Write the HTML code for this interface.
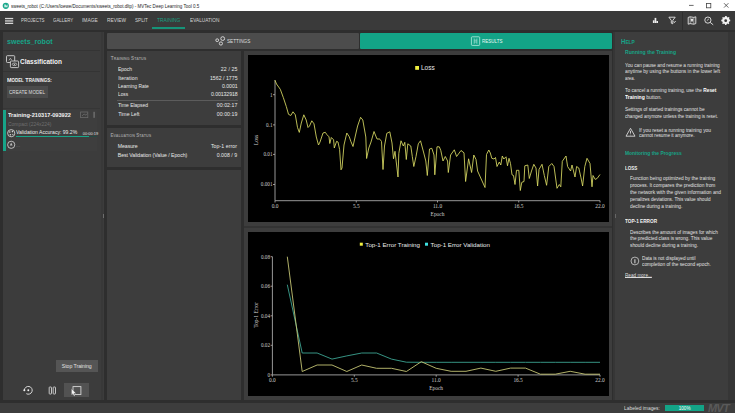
<!DOCTYPE html>
<html><head><meta charset="utf-8">
<style>
*{margin:0;padding:0;box-sizing:border-box}
html,body{width:735px;height:413px;overflow:hidden;background:#2e2e2e;font-family:"Liberation Sans",sans-serif;color:#e6e6e6}
.a{position:absolute}
.t{position:absolute;white-space:nowrap}
.t b{color:#fff}
</style></head><body>
<!-- title bar -->
<div class="a" style="left:0;top:0;width:735px;height:11.2px;background:#fff"></div>
<!-- toolbar -->
<div class="a" style="left:0;top:11.2px;width:735px;height:18.9px;background:#3a3a3a"></div>
<div class="a" style="left:152px;top:27.2px;width:33px;height:1.5px;background:#169479"></div>
<div class="a" style="left:682px;top:12px;width:1px;height:18.1px;background:#2e2e2e"></div>
<!-- left panel -->
<div class="a" style="left:2.7px;top:32.2px;width:101.5px;height:367.6px;background:#3c3c3c"></div>
<div class="a" style="left:101.2px;top:32.2px;width:2.2px;height:367.6px;background:#383838"></div>
<div class="a" style="left:3px;top:49.6px;width:97px;height:1px;background:#343434"></div>
<div class="a" style="left:3px;top:70.8px;width:97px;height:1px;background:#343434"></div>
<div class="a" style="left:7px;top:86.2px;width:41.2px;height:11.4px;background:#4b4b4b"></div>
<div class="a" style="left:3px;top:108.3px;width:97px;height:1px;background:#363636"></div>
<div class="a" style="left:6px;top:109.8px;width:91px;height:41.7px;background:#3e3e3e"></div>
<div class="a" style="left:2.7px;top:109.8px;width:3.4px;height:41.7px;background:#17a488"></div>
<div class="a" style="left:16px;top:135.8px;width:80.6px;height:1.3px;background:#244a43"></div>
<div class="a" style="left:16px;top:135.8px;width:72.6px;height:1.3px;background:#17a488"></div>
<div class="a" style="left:102.6px;top:214.4px;width:1.3px;height:3.9px;background:#6e6e6e"></div>
<!-- stop tooltip & button -->
<div class="a" style="left:56px;top:359.9px;width:41.9px;height:11.9px;background:#555"></div>
<div class="a" style="left:64.4px;top:383.3px;width:25px;height:13.8px;background:#525252"></div>
<!-- middle tabs -->
<div class="a" style="left:106.7px;top:32.9px;width:252.6px;height:16px;background:#4c4c4c;border-radius:1px"></div>
<div class="a" style="left:360px;top:32.9px;width:252.2px;height:16.1px;background:#13a487;border-radius:1px"></div>
<!-- status cards -->
<div class="a" style="left:106.7px;top:50.8px;width:134.6px;height:74.5px;background:#3d3d3d"></div>
<div class="a" style="left:116.5px;top:99.5px;width:121.5px;height:0.9px;background:#5c5c5c"></div>
<div class="a" style="left:106.7px;top:127.7px;width:134.6px;height:39.6px;background:#3d3d3d"></div>
<div class="a" style="left:106.7px;top:169.8px;width:134.6px;height:230px;background:#3d3d3d"></div>
<!-- charts frame -->
<div class="a" style="left:243.9px;top:50.8px;width:368.2px;height:349px;background:#3d3d3d"></div>
<div class="a" style="left:247.5px;top:55px;width:361.7px;height:166.6px;background:#000"></div>
<div class="a" style="left:244px;top:225.6px;width:368px;height:2.6px;background:#333"></div>
<div class="a" style="left:247.5px;top:232px;width:361.7px;height:164.2px;background:#000"></div>
<!-- help panel -->
<div class="a" style="left:612.7px;top:31.5px;width:122.3px;height:368.3px;background:#363636"></div>
<div class="a" style="left:615.3px;top:32.3px;width:112.8px;height:367.5px;background:#3d3d3d"></div>
<div class="a" style="left:615px;top:214px;width:1.1px;height:4px;background:#666"></div>
<!-- status bar -->
<div class="a" style="left:0;top:402.6px;width:735px;height:10.4px;background:#3d3d3d"></div>
<div class="a" style="left:665.3px;top:405.3px;width:38.7px;height:6.1px;background:#13a487"></div>

<svg class="a" style="left:0;top:0" width="735" height="413" viewBox="0 0 735 413">
<g stroke="#a8a8a8" stroke-width="0.9" fill="none">
<path d="M275 80V200.7H600"/>
<path d="M273 94.7H275"/>
<path d="M273 124.9H275"/>
<path d="M273 154.4H275"/>
<path d="M273 184.5H275"/>
<path d="M275 200.7V202.5"/>
<path d="M356.25 200.7V202.5"/>
<path d="M437.5 200.7V202.5"/>
<path d="M518.75 200.7V202.5"/>
<path d="M600 200.7V202.5"/>
<path d="M272.4 256.7V374.9H600"/>
<path d="M270.6 256.7H272.4"/>
<path d="M270.6 286.2H272.4"/>
<path d="M270.6 315.8H272.4"/>
<path d="M270.6 345.3H272.4"/>
<path d="M270.6 374.9H272.4"/>
<path d="M272.4 374.9V376.7"/>
<path d="M354.3 374.9V376.7"/>
<path d="M436.2 374.9V376.7"/>
<path d="M518.1 374.9V376.7"/>
<path d="M600 374.9V376.7"/>
</g>
<g font-family="Liberation Serif" fill="#d0d0d0" font-size="5.2" text-anchor="end">
<text x="272.5" y="96.5">1</text>
<text x="272.5" y="126.7">0.1</text>
<text x="272.5" y="156.20000000000002">0.01</text>
<text x="272.5" y="186.3">0.001</text>
<text x="270" y="258.5">0.08</text>
<text x="270" y="288.0">0.06</text>
<text x="270" y="317.6">0.04</text>
<text x="270" y="347.1">0.02</text>
<text x="270" y="376.7">0</text>
</g>
<g font-family="Liberation Serif" fill="#d0d0d0" font-size="5.4" text-anchor="middle">
<text x="275" y="207.8">0.0</text>
<text x="356.25" y="207.8">5.5</text>
<text x="437.5" y="207.8">11.0</text>
<text x="518.75" y="207.8">16.5</text>
<text x="600" y="207.8">22.0</text>
<text x="437.5" y="215.8">Epoch</text>
<text x="272.4" y="382">0.0</text>
<text x="354.3" y="382">5.5</text>
<text x="436.2" y="382">11.0</text>
<text x="518.1" y="382">16.5</text>
<text x="600" y="382">22.0</text>
<text x="436.2" y="390">Epoch</text>
<text transform="translate(258,140) rotate(-90)" x="0" y="0">Loss</text>
<text transform="translate(258,315) rotate(-90)" x="0" y="0">Top-1 Error</text>
</g>
<rect x="415.2" y="66" width="3.8" height="3.8" fill="#f0f040"/>
<text x="421" y="70.4" font-size="6.5" font-family="Liberation Sans" fill="#e8e8e8">Loss</text>
<rect x="359.8" y="242.7" width="3" height="3" fill="#f0f040"/>
<text x="365.3" y="246.6" font-size="6.2" font-family="Liberation Sans" fill="#e8e8e8">Top-1 Error Training</text>
<rect x="425" y="242.7" width="3" height="3" fill="#3ee0e0"/>
<text x="430.6" y="246.6" font-size="6.2" font-family="Liberation Sans" fill="#e8e8e8">Top-1 Error Validation</text>
<polyline points="275,80.3 276.5,84 280.3,89.3 283.3,97.5 286.3,106.5 288.5,114.3 290.8,115.5 293,111.8 295.3,114.8 297.5,127.5 299.3,132.4 301.3,123 303.8,114.8 306.2,120 308,127.5 309.5,126 311.8,120.8 314,123.8 316.3,137 318.5,145 320,142 323,133 325.3,132.3 326.8,134.5 329,136.8 329.8,143.5 331.3,137.5 333.6,139.8 334.3,148 336.6,141.3 338,142 339.6,149.5 341,169.8 342,168 344,145 346.8,133 349.3,136.8 350.8,141.3 353,146.5 355.3,136 357.6,126 360.6,117.3 362.8,120 365.8,137 366.6,158.5 368.8,148 371,142 374,131.5 377,139 379.4,139 380,139.3 381.5,141.5 383,169.5 384.5,146 386.8,133.3 389.8,131.8 392,143 393.5,158.8 395,151.3 398,177 398.8,153.5 401,140.8 403.3,146 404.8,142.3 406.3,159.5 407.8,143.8 410.8,146 412.3,156.5 413.8,166.5 416,156.5 418.3,143.8 420.5,140.8 423.5,152 425.8,161 427.3,175.5 429.5,149 431.8,148.3 434,155 434.8,174.8 437,146.8 439.3,146.8 440.8,150.5 443,161 445.3,156.5 447.6,161 448.3,172.5 450.6,155 454.3,149.8 456.6,156.5 461,150.5 464,152.8 465.6,181.5 468.6,158.8 471.6,172.5 473.8,155 476,159.5 477.6,171 485,187.5 486.5,154.5 488.8,150 490.3,153 491.8,158.3 494,159 495.5,157.5 497,166.5 499.3,162 500.8,165 502.3,156 503.8,159 506,156.8 507.5,165.8 509,158.3 510.5,163.5 512,174.8 513.5,175.5 515,184.5 516.5,170.3 518.8,170.3 520.3,190.5 521.8,182.3 524,181.5 524.8,165.8 527.8,165 529.3,178.5 531.5,171 533.8,164.3 536,168 537.6,186 539,169.5 542,164.3 544.3,175.5 546.6,185.3 548.8,166.5 551.8,163.5 554,166.5 557,188.3 559.3,184.5 560.8,186.8 562.3,161.3 566,156 567.6,166.5 570.6,171 572,165 575,177 576.6,166.5 578.8,168 581,177.8 582.6,186 584.8,166.5 587,158.3 590,163.5 592,186.8 593,175.5 595.2,179.4 597.2,178.4 600,174.5" fill="none" stroke="#dadc64" stroke-width="0.85" stroke-linejoin="round"/>
<polyline points="287.3,284.7 302.2,353 317.1,353 332.0,359.1 346.8,355.9 361.7,353 376.6,353 391.5,359.1 406.4,362.2 421.3,362.3 436.2,362.3 451.1,362.3 466.0,362.3 480.9,362.3 495.8,362.3 510.6,362.3 525.5,362.3 540.4,362.3 555.3,362.3 570.2,362.3 585.1,362.3 600.0,362.3" fill="none" stroke="#3ca492" stroke-width="0.9"/>
<polyline points="287.3,256.7 302.2,371.5 317.1,365 332.0,365 346.8,371.5 361.7,365 376.6,368.3 391.5,368.3 406.4,371.5 421.3,361.7 436.2,368.3 451.1,371.3 466.0,371.3 480.9,368.1 495.8,371.3 510.6,368.1 525.5,368.1 540.4,374.2 555.3,374.2 570.2,371.3 585.1,374.2 600.0,374.2" fill="none" stroke="#c4c474" stroke-width="0.9"/>
</svg>
<svg class="a" style="left:0;top:0" width="735" height="413" viewBox="0 0 735 413">
<!-- title logo -->
<circle cx="5.8" cy="5.8" r="3.1" fill="#1aa88c"/>
<path d="M4.3 4.4h1.3l0.9 1.4 0.9-1.4h0.2v2.8h-3.3z" fill="#e8f6f2" opacity="0.85"/>
<!-- window controls -->
<path d="M689 5.4H693.6" stroke="#444" stroke-width="0.8"/>
<rect x="706.4" y="3.4" width="4.4" height="4.4" fill="none" stroke="#444" stroke-width="0.8"/>
<path d="M724 3.2L728.4 7.6M728.4 3.2L724 7.6" stroke="#444" stroke-width="0.8"/>
<!-- hamburger -->
<g fill="#d8d8d8"><rect x="5" y="17.9" width="8.2" height="1.3"/><rect x="5" y="20.3" width="8.2" height="1.3"/><rect x="5" y="22.7" width="8.2" height="1.3"/></g>
<!-- toolbar right icons -->
<g fill="#eee">
<rect x="652.9" y="20.3" width="1.6" height="2.7"/><rect x="654.6" y="17.9" width="1.7" height="5.1"/><rect x="656.4" y="21" width="1.6" height="2"/>
</g>
<g fill="none" stroke="#e6e6e6" stroke-width="0.9">
<path d="M668.9 17.2H675.2L672.8 20.4V23.8L671.3 23.2V20.4Z"/>
<path d="M673.6 21.6L674.4 22.6L675.6 21"/>
<path d="M688.2 17.4V24.2L690.2 23.6L693.8 24.2L695.8 23.6V16.8L693.8 17.4L690.2 16.8Z"/><path d="M690.2 16.8V23.6M693.8 17.4V24.2" stroke-width="0.6"/>
<circle cx="707.9" cy="20.1" r="3.1"/>
<path d="M710.2 22.4L713.2 24.8"/>
<path d="M706.8 20.7L708.9 18.9" stroke-width="0.8"/>
</g>
<path d="M692 22.4L690.9 20.3A1.2 1.2 0 1 1 693.1 20.3Z" fill="#e6e6e6"/>
<!-- gear -->
<g transform="translate(725.7,20.7)">
<path fill="#f2f2f2" fill-rule="evenodd" d="M-0.8,-4.3L0.8,-4.3L1.1,-3.1L2.2,-2.6L3.2,-3.3L4.3,-2.2L3.6,-1.2L4.1,-0.1L5,0.2L5,1.8L3.8,2.1L3.3,3.2L4,4.2L2.9,5.3L1.9,4.6L0.8,5.1L0.5,6.3L-1,6.3L-1.3,5.1L-2.4,4.6L-3.4,5.3L-4.5,4.2L-3.8,3.2L-4.3,2.1L-5.5,1.8L-5.5,0.2L-4.3,-0.1L-3.8,-1.2L-4.5,-2.2L-3.4,-3.3L-2.4,-2.6L-1.3,-3.1Z" transform="translate(0.25,-1) scale(0.85)"/>
<circle cx="0" cy="0" r="1.4" fill="#393939"/>
</g>
<!-- classification icon -->
<g fill="none" stroke="#d4d4d4" stroke-width="0.9">
<rect x="6.5" y="55.7" width="8.2" height="6.8" rx="0.8"/>
<rect x="10.4" y="61" width="8.2" height="6.6" rx="0.8" fill="#3a3a3a"/>
<path d="M9 60.3L10.4 58.3L11.6 60" stroke-width="0.7"/>
<ellipse cx="14.5" cy="64.3" rx="2.3" ry="1.3" stroke-width="0.7"/>
</g>
<circle cx="14.5" cy="64.3" r="0.6" fill="#d4d4d4"/>
<!-- card icons -->
<g fill="none" stroke="#6a6a6a" stroke-width="0.8">
<rect x="80.6" y="112" width="7.2" height="5.6"/>
<path d="M82 116L84 114L86 115.2L87.6 113.4"/>
</g>
<rect x="93.4" y="111.8" width="1.4" height="6" fill="#707070"/>
<!-- circle icons -->
<circle cx="11.2" cy="133.2" r="3.6" fill="none" stroke="#cfcfcf" stroke-width="0.9"/>
<g fill="#d6d6d6"><circle cx="9.8" cy="132" r="0.8"/><circle cx="12.4" cy="131.6" r="0.8"/><circle cx="10.4" cy="134.8" r="0.8"/><circle cx="12.8" cy="134.3" r="0.6"/></g>
<circle cx="11.2" cy="144.8" r="3.6" fill="none" stroke="#c8c8c8" stroke-width="0.9"/>
<path d="M11.2 142.6L12.6 145.6H9.8Z" fill="#bbb"/>
<!-- settings icon -->
<g fill="none" stroke="#e0e0e0" stroke-width="0.9">
<circle cx="217.2" cy="40.2" r="1.4"/>
<circle cx="222.7" cy="38.6" r="1.9"/>
<circle cx="220.9" cy="43.5" r="1.6"/>
</g>
<!-- results icon -->
<g fill="none" stroke="#b8ece0" stroke-width="0.8">
<rect x="471.4" y="36.8" width="8.3" height="8.6" rx="0.8"/>
<path d="M474.2 38.5V43.8M476.9 38.5V43.8M474.2 40.2H476.9M474.2 42H476.9" stroke-width="0.6"/>
</g>
<!-- warning -->
<g fill="none" stroke="#d8d8d8" stroke-width="0.9">
<path d="M630.5 128.3L635 136.2H626Z" stroke-linejoin="round"/>
<path d="M630.5 130.8V133.6" />
</g>
<circle cx="630.5" cy="134.9" r="0.4" fill="#d8d8d8"/>
<!-- info -->
<circle cx="634.9" cy="261" r="3.9" fill="none" stroke="#cfcfcf" stroke-width="0.8"/>
<path d="M634.9 259.2V263.3" stroke="#cfcfcf" stroke-width="1.1"/>
<!-- bottom controls -->
<path d="M24.4 390.3A3.9 3.9 0 1 1 26.35 393.68" fill="none" stroke="#d6d6d6" stroke-width="1"/>
<circle cx="24.3" cy="390.2" r="1" fill="#f0f0f0"/>
<circle cx="28.3" cy="390.3" r="0.95" fill="#f4f4f4"/>
<g fill="none" stroke="#d6d6d6" stroke-width="0.9">
<rect x="49.2" y="387" width="2.3" height="7" rx="0.6"/>
<rect x="53.2" y="387" width="2.3" height="7" rx="0.6"/>
<rect x="73" y="386.6" width="7.9" height="7.9"/>
</g>
<path d="M71.4 388.6V395.2L72.9 393.8L74.1 396.2L75.1 395.7L74 393.4H76.2Z" fill="#f4f4f4" stroke="#3a3a3a" stroke-width="0.35"/>
<!-- MVTec logo -->
<text x="708" y="412.4" font-family="Liberation Sans" font-weight="bold" font-style="italic" font-size="11" fill="#5a5a5a" letter-spacing="-0.8">MVT</text>
</svg>

<div class="t" id="title" style="top:4.38px;font-size:5.4px;line-height:5.4px;font-weight:400;color:#1e1e1e;letter-spacing:0.000px;left:10.77px;transform:scaleX(0.8381);transform-origin:0 0;">sweets_robot (C:/Users/loewe/Documents/sweets_robot.dltp) - MVTec Deep Learning Tool 0.5</div>
<div class="t" id="m1" style="top:17.89px;font-size:5.2px;line-height:5.2px;font-weight:400;color:#d4d4d4;letter-spacing:0.000px;left:20.68px;transform:scaleX(0.8508);transform-origin:0 0;">PROJECTS</div>
<div class="t" id="m2" style="top:17.89px;font-size:5.2px;line-height:5.2px;font-weight:400;color:#d4d4d4;letter-spacing:0.000px;left:52.78px;transform:scaleX(0.8446);transform-origin:0 0;">GALLERY</div>
<div class="t" id="m3" style="top:17.89px;font-size:5.2px;line-height:5.2px;font-weight:400;color:#d4d4d4;letter-spacing:0.000px;left:82.16px;transform:scaleX(0.9383);transform-origin:0 0;">IMAGE</div>
<div class="t" id="m4" style="top:17.89px;font-size:5.2px;line-height:5.2px;font-weight:400;color:#d4d4d4;letter-spacing:0.000px;left:106.76px;transform:scaleX(0.9274);transform-origin:0 0;">REVIEW</div>
<div class="t" id="m5" style="top:17.89px;font-size:5.2px;line-height:5.2px;font-weight:400;color:#d4d4d4;letter-spacing:0.000px;left:134.57px;transform:scaleX(0.8920);transform-origin:0 0;">SPLIT</div>
<div class="t" id="m6" style="top:17.89px;font-size:5.2px;line-height:5.2px;font-weight:400;color:#18a083;letter-spacing:0.000px;left:157.05px;transform:scaleX(0.9433);transform-origin:0 0;">TRAINING</div>
<div class="t" id="m7" style="top:17.89px;font-size:5.2px;line-height:5.2px;font-weight:400;color:#d4d4d4;letter-spacing:0.000px;left:189.76px;transform:scaleX(0.9185);transform-origin:0 0;">EVALUATION</div>
<div class="t" id="proj" style="top:38.24px;font-size:7.6px;line-height:7.6px;font-weight:700;color:#17a488;letter-spacing:0.000px;left:6.55px;transform:scaleX(0.9317);transform-origin:0 0;">sweets_robot</div>
<div class="t" id="cls" style="top:57.68px;font-size:7.0px;line-height:7.0px;font-weight:700;color:#f2f2f2;letter-spacing:0.000px;left:20.18px;transform:scaleX(0.9216);transform-origin:0 0;">Classification</div>
<div class="t" id="mt" style="top:76.94px;font-size:6.0px;line-height:6.0px;font-weight:700;color:#f2f2f2;letter-spacing:0.000px;left:6.63px;transform:scaleX(0.9150);transform-origin:0 0;">M<span style="font-size:0.8em">ODEL</span> T<span style="font-size:0.8em">RAININGS</span>:</div>
<div class="t" id="cm" style="top:90.30px;font-size:5.0px;line-height:5.0px;font-weight:400;color:#dcdcdc;letter-spacing:0.000px;left:8.77px;transform:scaleX(0.9198);transform-origin:0 0;">CREATE MODEL</div>
<div class="t" id="tr" style="top:111.84px;font-size:6.0px;line-height:6.0px;font-weight:700;color:#f2f2f2;letter-spacing:0.000px;left:7.72px;transform:scaleX(0.9345);transform-origin:0 0;">Training-210317-093922</div>
<div class="t" id="cp" style="top:121.92px;font-size:5.5px;line-height:5.5px;font-weight:400;color:#6e6e6e;letter-spacing:0.000px;left:7.75px;transform:scaleX(0.8961);transform-origin:0 0;">Compact (224x224)</div>
<div class="t" id="va" style="top:129.72px;font-size:5.5px;line-height:5.5px;font-weight:400;color:#ececec;letter-spacing:0.000px;left:16.05px;transform:scaleX(0.9239);transform-origin:0 0;">Validation Accuracy: 99.2%</div>
<div class="t" id="tm" style="top:131.82px;font-size:3.9px;line-height:3.9px;font-weight:400;color:#e0e0e0;letter-spacing:0.033px;left:82.81px;">00:00:19</div>
<div class="t" id="dots" style="top:142.70px;font-size:5.0px;line-height:5.0px;font-weight:400;color:#777;letter-spacing:0.000px;left:15.95px;">...</div>
<div class="t" id="stop" style="top:364.19px;font-size:5.2px;line-height:5.2px;font-weight:400;color:#e0e0e0;letter-spacing:-0.047px;left:61.74px;">Stop Training</div>
<div class="t" id="set" style="top:39.30px;font-size:5.0px;line-height:5.0px;font-weight:400;color:#dedede;letter-spacing:0.000px;left:226.87px;transform:scaleX(0.9341);transform-origin:0 0;">SETTINGS</div>
<div class="t" id="res" style="top:39.30px;font-size:5.0px;line-height:5.0px;font-weight:400;color:#e8f8f4;letter-spacing:0.000px;left:481.87px;transform:scaleX(0.9008);transform-origin:0 0;">RESULTS</div>
<div class="t" id="ts" style="top:56.52px;font-size:4.6px;line-height:4.6px;font-weight:700;color:#9a9a9a;letter-spacing:0.072px;left:110.87px;font-family:"Liberation Serif",serif;">T<span style="font-size:0.8em">RAINING</span> S<span style="font-size:0.8em">TATUS</span></div>
<div class="t" id="sl0" style="top:66.89px;font-size:5.2px;line-height:5.2px;font-weight:400;color:#e8e8e8;letter-spacing:0.000px;left:118.25px;transform:scaleX(0.9508);transform-origin:0 0;">Epoch</div>
<div class="t" id="sv0" style="top:66.89px;font-size:5.2px;line-height:5.2px;font-weight:400;color:#e8e8e8;letter-spacing:0.124px;right:497.44px;">22 / 25</div>
<div class="t" id="sl1" style="top:75.59px;font-size:5.2px;line-height:5.2px;font-weight:400;color:#e8e8e8;letter-spacing:0.084px;left:118.24px;">Iteration</div>
<div class="t" id="sv1" style="top:75.59px;font-size:5.2px;line-height:5.2px;font-weight:400;color:#e8e8e8;letter-spacing:0.021px;right:497.44px;">1562 / 1775</div>
<div class="t" id="sl2" style="top:83.99px;font-size:5.2px;line-height:5.2px;font-weight:400;color:#e8e8e8;letter-spacing:0.000px;left:118.25px;transform:scaleX(0.9447);transform-origin:0 0;">Learning Rate</div>
<div class="t" id="sv2" style="top:83.99px;font-size:5.2px;line-height:5.2px;font-weight:400;color:#e8e8e8;letter-spacing:-0.051px;right:497.44px;">0.0001</div>
<div class="t" id="sl3" style="top:92.39px;font-size:5.2px;line-height:5.2px;font-weight:400;color:#e8e8e8;letter-spacing:0.000px;left:118.26px;transform:scaleX(0.9188);transform-origin:0 0;">Loss</div>
<div class="t" id="sv3" style="top:92.39px;font-size:5.2px;line-height:5.2px;font-weight:400;color:#e8e8e8;letter-spacing:-0.089px;right:497.44px;">0.00132918</div>
<div class="t" id="sl4" style="top:103.39px;font-size:5.2px;line-height:5.2px;font-weight:400;color:#e8e8e8;letter-spacing:0.000px;left:118.25px;transform:scaleX(0.9513);transform-origin:0 0;">Time Elapsed</div>
<div class="t" id="sv4" style="top:103.39px;font-size:5.2px;line-height:5.2px;font-weight:400;color:#e8e8e8;letter-spacing:0.088px;right:497.44px;">00:02:17</div>
<div class="t" id="sl5" style="top:112.09px;font-size:5.2px;line-height:5.2px;font-weight:400;color:#e8e8e8;letter-spacing:-0.015px;left:118.24px;">Time Left</div>
<div class="t" id="sv5" style="top:112.09px;font-size:5.2px;line-height:5.2px;font-weight:400;color:#e8e8e8;letter-spacing:0.088px;right:497.44px;">00:00:19</div>
<div class="t" id="es" style="top:134.12px;font-size:4.6px;line-height:4.6px;font-weight:700;color:#9a9a9a;letter-spacing:0.049px;left:110.47px;font-family:"Liberation Serif",serif;">E<span style="font-size:0.8em">VALUATION</span> S<span style="font-size:0.8em">TATUS</span></div>
<div class="t" id="el0" style="top:144.19px;font-size:5.2px;line-height:5.2px;font-weight:400;color:#e8e8e8;letter-spacing:-0.045px;left:117.74px;">Measure</div>
<div class="t" id="ev0" style="top:144.19px;font-size:5.2px;line-height:5.2px;font-weight:400;color:#e8e8e8;letter-spacing:0.064px;right:498.04px;">Top-1 error</div>
<div class="t" id="el1" style="top:152.69px;font-size:5.2px;line-height:5.2px;font-weight:400;color:#e8e8e8;letter-spacing:-0.050px;left:117.74px;">Best Validation (Value / Epoch)</div>
<div class="t" id="ev1" style="top:152.69px;font-size:5.2px;line-height:5.2px;font-weight:400;color:#e8e8e8;letter-spacing:0.027px;right:497.84px;">0.008 / 9</div>
<div class="t" id="hh" style="top:38.60px;font-size:6.6px;line-height:6.6px;font-weight:700;color:#17a488;letter-spacing:0.000px;left:620.70px;transform:scaleX(0.9195);transform-origin:0 0;font-family:"Liberation Serif",serif;">H<span style="font-size:0.8em">ELP</span></div>
<div class="t" id="h1" style="top:49.83px;font-size:5.3px;line-height:5.3px;font-weight:700;color:#17a488;letter-spacing:0.000px;left:624.54px;transform:scaleX(0.9649);transform-origin:0 0;">Running the Training</div>
<div class="t" id="hl0" style="top:62.53px;font-size:5.3px;line-height:5.3px;font-weight:400;color:#e2e2e2;letter-spacing:0.000px;left:624.56px;transform:scaleX(0.8872);transform-origin:0 0;">You can pause and resume a running training</div>
<div class="t" id="hl1" style="top:69.13px;font-size:5.3px;line-height:5.3px;font-weight:400;color:#e2e2e2;letter-spacing:0.000px;left:624.56px;transform:scaleX(0.9086);transform-origin:0 0;">anytime by using the buttons in the lower left</div>
<div class="t" id="hl2" style="top:76.13px;font-size:5.3px;line-height:5.3px;font-weight:400;color:#e2e2e2;letter-spacing:0.000px;left:624.58px;transform:scaleX(0.8140);transform-origin:0 0;">area.</div>
<div class="t" id="hl3" style="top:88.03px;font-size:5.3px;line-height:5.3px;font-weight:400;color:#e2e2e2;letter-spacing:0.000px;left:624.56px;transform:scaleX(0.9046);transform-origin:0 0;">To cancel a running training, use the <b>Reset</b></div>
<div class="t" id="hl4" style="top:95.43px;font-size:5.3px;line-height:5.3px;font-weight:400;color:#e2e2e2;letter-spacing:0.000px;left:624.55px;transform:scaleX(0.9589);transform-origin:0 0;"><b>Training</b> button.</div>
<div class="t" id="hl5" style="top:106.93px;font-size:5.3px;line-height:5.3px;font-weight:400;color:#e2e2e2;letter-spacing:0.000px;left:624.56px;transform:scaleX(0.8947);transform-origin:0 0;">Settings of started trainings cannot be</div>
<div class="t" id="hl6" style="top:114.33px;font-size:5.3px;line-height:5.3px;font-weight:400;color:#e2e2e2;letter-spacing:0.000px;left:624.57px;transform:scaleX(0.8697);transform-origin:0 0;">changed anymore unless the training is reset.</div>
<div class="t" id="hl7" style="top:127.53px;font-size:5.3px;line-height:5.3px;font-weight:400;color:#e2e2e2;letter-spacing:0.000px;left:638.56px;transform:scaleX(0.9156);transform-origin:0 0;">If you reset a running training you</div>
<div class="t" id="hl8" style="top:132.73px;font-size:5.3px;line-height:5.3px;font-weight:400;color:#e2e2e2;letter-spacing:0.000px;left:638.57px;transform:scaleX(0.8844);transform-origin:0 0;">cannot resume it anymore.</div>
<div class="t" id="hl9" style="top:176.03px;font-size:5.3px;line-height:5.3px;font-weight:400;color:#e2e2e2;letter-spacing:0.000px;left:629.86px;transform:scaleX(0.9107);transform-origin:0 0;">Function being optimized by the training</div>
<div class="t" id="hl10" style="top:183.43px;font-size:5.3px;line-height:5.3px;font-weight:400;color:#e2e2e2;letter-spacing:0.000px;left:629.86px;transform:scaleX(0.9023);transform-origin:0 0;">process. It compares the prediction from</div>
<div class="t" id="hl11" style="top:190.03px;font-size:5.3px;line-height:5.3px;font-weight:400;color:#e2e2e2;letter-spacing:0.000px;left:629.86px;transform:scaleX(0.9169);transform-origin:0 0;">the network with the given information and</div>
<div class="t" id="hl12" style="top:197.13px;font-size:5.3px;line-height:5.3px;font-weight:400;color:#e2e2e2;letter-spacing:0.000px;left:629.87px;transform:scaleX(0.8789);transform-origin:0 0;">penalizes deviations. This value should</div>
<div class="t" id="hl13" style="top:204.03px;font-size:5.3px;line-height:5.3px;font-weight:400;color:#e2e2e2;letter-spacing:0.000px;left:629.86px;transform:scaleX(0.9075);transform-origin:0 0;">decline during a training.</div>
<div class="t" id="hl14" style="top:229.83px;font-size:5.3px;line-height:5.3px;font-weight:400;color:#e2e2e2;letter-spacing:0.000px;left:629.86px;transform:scaleX(0.8898);transform-origin:0 0;">Describes the amount of images for which</div>
<div class="t" id="hl15" style="top:236.43px;font-size:5.3px;line-height:5.3px;font-weight:400;color:#e2e2e2;letter-spacing:0.000px;left:629.86px;transform:scaleX(0.8908);transform-origin:0 0;">the predicted class is wrong. This value</div>
<div class="t" id="hl16" style="top:243.33px;font-size:5.3px;line-height:5.3px;font-weight:400;color:#e2e2e2;letter-spacing:0.000px;left:629.86px;transform:scaleX(0.9089);transform-origin:0 0;">should decline during a training.</div>
<div class="t" id="hl17" style="top:256.13px;font-size:5.3px;line-height:5.3px;font-weight:400;color:#e2e2e2;letter-spacing:0.000px;left:641.87px;transform:scaleX(0.8856);transform-origin:0 0;">Data is not displayed until</div>
<div class="t" id="hl18" style="top:261.93px;font-size:5.3px;line-height:5.3px;font-weight:400;color:#e2e2e2;letter-spacing:0.000px;left:641.86px;transform:scaleX(0.9016);transform-origin:0 0;">completion of the second epoch.</div>
<div class="t" id="h2" style="top:150.53px;font-size:5.3px;line-height:5.3px;font-weight:700;color:#17a488;letter-spacing:0.000px;left:624.55px;transform:scaleX(0.9260);transform-origin:0 0;">Monitoring the Progress</div>
<div class="t" id="h3" style="top:165.89px;font-size:5.2px;line-height:5.2px;font-weight:700;color:#f2f2f2;letter-spacing:0.000px;left:624.57px;transform:scaleX(0.8747);transform-origin:0 0;">LOSS</div>
<div class="t" id="h4" style="top:218.89px;font-size:5.2px;line-height:5.2px;font-weight:700;color:#f2f2f2;letter-spacing:0.000px;left:624.56px;transform:scaleX(0.9070);transform-origin:0 0;">TOP-1 ERROR</div>
<div class="t" id="rm" style="top:272.99px;font-size:5.2px;line-height:5.2px;font-weight:400;color:#dcdcdc;letter-spacing:0.000px;left:624.57px;transform:scaleX(0.8955);transform-origin:0 0;text-decoration:underline;text-underline-offset:0.3px;">Read more...</div>
<div class="t" id="li" style="top:405.73px;font-size:5.3px;line-height:5.3px;font-weight:400;color:#dedede;letter-spacing:0.000px;left:623.76px;transform:scaleX(0.9232);transform-origin:0 0;">Labeled images:</div>
<div class="t" id="pc" style="top:406.62px;font-size:4.6px;line-height:4.6px;font-weight:400;color:#fff;letter-spacing:0.000px;left:684.6px;transform:translateX(-50%);">100%</div>
</body></html>
